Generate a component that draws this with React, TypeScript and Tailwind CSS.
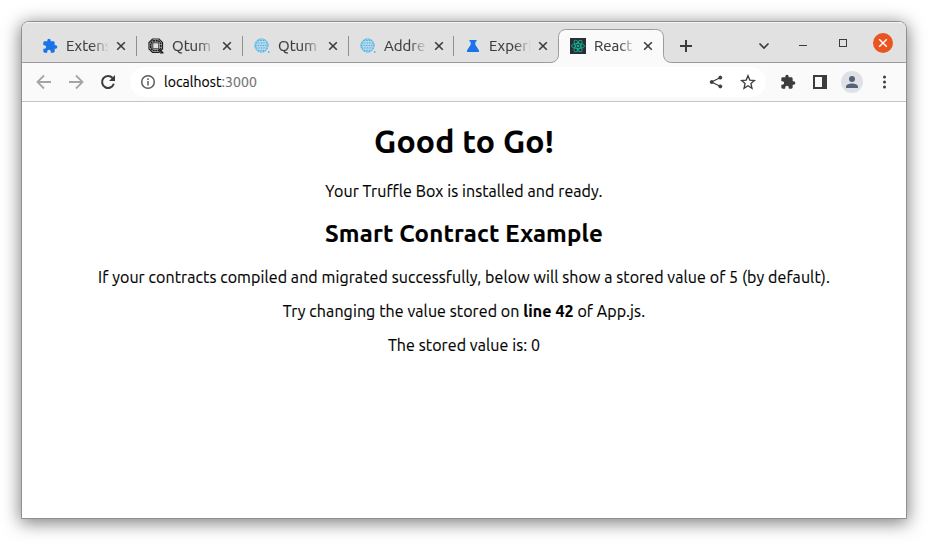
import React from "react";

const uiFont = "font-['Ubuntu','Noto_Sans',sans-serif]";
const puzzle =
  "M20.5 11H19V7c0-1.1-.9-2-2-2h-4V3.5a2.5 2.5 0 0 0-5 0V5H4c-1.1 0-2 .9-2 2v3.8h1.5a2.7 2.7 0 0 1 0 5.4H2V20c0 1.1.9 2 2 2h3.8v-1.5a2.7 2.7 0 0 1 5.4 0V22H17c1.1 0 2-.9 2-2v-4h1.5a2.5 2.5 0 0 0 0-5z";

function PuzzleIcon({ className }: { className: string }) {
  return (
    <svg viewBox="0 0 24 24" className={`h-4 w-4 ${className}`} fill="currentColor">
      <path d={puzzle} />
    </svg>
  );
}

function QtumIcon() {
  return (
    <svg viewBox="0 0 16 16" className="h-4 w-4" fill="none" stroke="#1f1f1f">
      <path d="M4.500 1h6.500l3.500 3.500v6.500L11 14.500H4.500L1 11V4.500z" strokeWidth="1.200" />
      <path d="M5 2.900h5.500l2.200 2.200v5.400l-2.200 2.200H5l-2.200-2.200V5.100z" strokeWidth="1.700" strokeDasharray="2.200 .4" />
      <path d="M4.800 4.800h6v6h-6z" fill="#e1e1e1" strokeWidth=".9" />
      <path d="M11 11.300l4.300 3.700M12 14.800h3.500" strokeWidth="1.300" />
    </svg>
  );
}

function GlobeIcon() {
  return (
    <svg viewBox="0 0 16 16" className="h-4 w-4" fill="none" stroke="#45b0e6" strokeWidth="1">
      <circle cx="7.500" cy="7.500" r="7" fill="#a9d3ea" stroke="none" />
      <circle cx="7.500" cy="7.500" r="6.600" strokeDasharray="1.700 .9" />
      <path
        d="M4 2.500h8M2 5h11M1 7.500h13M2 10h11M4 12.500h8"
        strokeDasharray="1.300 1.200"
      />
      <path d="M5 3.700h6M3 6.200h9M3 8.700h9M5 11.200h6" stroke="#e1e1e1" strokeWidth=".9" strokeDasharray="1.200 1.300" />
      <path d="M14 13.200h1.500v1.500H14z" fill="#35b5ee" stroke="none" />
    </svg>
  );
}

function FlaskIcon() {
  return (
    <svg viewBox="0 0 16 16" className="h-4 w-4" fill="#1a73e8">
      <path d="M4.500 2h7v1.800h-1.200V6.800l3.600 5.400c.6 1 0 1.800-1 1.800H3.100c-1 0-1.600-.8-1-1.800l3.600-5.400V3.800H4.500z" />
    </svg>
  );
}

function ReactIcon() {
  return (
    <svg viewBox="0 0 16 16" className="h-4 w-4" fill="none" stroke="#11b48e" strokeWidth=".9">
      <path d="M0 0h16v16H0z" fill="#2a2c37" stroke="none" />
      <ellipse cx="8" cy="8" rx="6.500" ry="2.500" />
      <ellipse cx="8" cy="8" rx="6.500" ry="2.500" transform="rotate(60 8 8)" />
      <ellipse cx="8" cy="8" rx="6.500" ry="2.500" transform="rotate(120 8 8)" />
      <circle cx="8" cy="8" r="1.300" fill="#11b48e" stroke="none" />
    </svg>
  );
}

function Cross({ className }: { className: string }) {
  return (
    <svg viewBox="0 0 10 10" className={className} fill="none" stroke="currentColor">
      <path d="M1.200 1.200l7.600 7.600M8.800 1.200l-7.600 7.600" />
    </svg>
  );
}

interface TabProps {
  icon: React.ReactNode;
  label: string;
  width: string;
  labelWidth?: string;
  active?: boolean;
  divider?: boolean;
}

function Tab({ icon, label, width, labelWidth = "w-[43px]", active, divider }: TabProps) {
  return (
    <div className={`relative flex h-[34px] shrink-0 items-center pl-[11px] ${width}`}>
      {active && (
        <svg className="absolute top-0 -left-[9px] h-[34px] w-[123px]" viewBox="0 0 123 34" fill="none">
          <path
            d="M0 33.5c5 0 8.500-3 8.500-8V8.500c0-5 3-8 8-8h89c5 0 8 3 8 8v17c0 5 3.500 8 8.500 8V34H0z"
            fill="#fafafa"
          />
          <path
            d="M0 33.500c5 0 8.500-3 8.500-8V8.500c0-5 3-8 8-8h89c5 0 8 3 8 8v17c0 5 3.500 8 8.500 8"
            stroke="#9b9b9b"
          />
        </svg>
      )}
      <span className="relative shrink-0">{icon}</span>
      <span
        className={`relative ml-2 shrink-0 overflow-hidden text-[15px] leading-5 whitespace-nowrap text-[#3c3c3c] mask-r-from-60% [-webkit-text-stroke:0.15px] ${labelWidth}`}
      >
        {label}
      </span>
      <Cross className="relative ml-[7px] h-[10px] w-[10px] shrink-0 stroke-[1.6] text-[#3c3c3c]" />
      {divider && <span className="absolute top-[7px] right-0 h-5 w-px bg-[#8f8f8f]" />}
    </div>
  );
}

function TabStrip() {
  return (
    <div className="flex h-[41px] items-start rounded-t-[7px] border-t border-[#f4f4f4] bg-[#e1e1e1] pt-[6px] pl-[9px] shadow-[inset_0_-1px_0_#9b9b9b]">
      <Tab icon={<PuzzleIcon className="text-[#1a73e8]" />} label="Extens" width="w-[106px]" divider />
      <Tab icon={<QtumIcon />} label="Qtum" width="w-[106px]" divider />
      <Tab icon={<GlobeIcon />} label="Qtum" width="w-[106px]" divider />
      <Tab icon={<GlobeIcon />} label="Addre" width="w-[105px]" divider />
      <Tab icon={<FlaskIcon />} label="Experi" width="w-[105px]" labelWidth="w-[42px]" />
      <Tab icon={<ReactIcon />} label="React" width="w-[106px]" labelWidth="w-[42px]" active />
      <svg viewBox="0 0 12 12" className="mt-[11px] ml-[15px] h-3 w-3 stroke-[#3c3c3c] stroke-2">
        <path d="M6 0v12M0 6h12" />
      </svg>
      <svg viewBox="0 0 12 12" className="mt-[11px] ml-[66px] h-3 w-3" fill="none" stroke="#3c3c3c" strokeWidth="1.7">
        <path d="M1.500 3.500L6 8l4.500-4.500" />
      </svg>
      <span className="mt-4 ml-[29px] h-px w-2 bg-[#3c3c3c]" />
      <span className="mt-[10px] ml-8 h-2 w-2 border border-[#3c3c3c]" />
      <span className="mt-1 ml-[26px] flex h-5 w-5 items-center justify-center rounded-full bg-[#e95420]">
        <Cross className="h-[10px] w-[10px] stroke-[1.4] text-white" />
      </span>
    </div>
  );
}

function Toolbar() {
  return (
    <div className="flex h-[39px] items-center border-b border-[#c4c4c4] bg-[#fafafa] pl-[14px]">
      <svg viewBox="0 0 16 16" className="h-4 w-4" fill="none" stroke="#a5a5a5" strokeWidth="1.800">
        <path d="M15 8H2M8 1.500L1.500 8 8 14.500" />
      </svg>
      <svg viewBox="0 0 16 16" className="ml-4 h-4 w-4" fill="none" stroke="#a5a5a5" strokeWidth="1.800">
        <path d="M1 8h13M8 1.500L14.500 8 8 14.500" />
      </svg>
      <svg viewBox="0 0 16 16" className="ml-4 h-4 w-4" fill="none" stroke="#3c3c3c" strokeWidth="2">
        <path d="M13.800 9.800A6 6 0 1 1 12.600 4" />
        <path d="M15 1v6H9z" fill="#3c3c3c" stroke="none" />
      </svg>
      <div className="ml-[14px] flex h-[30px] w-[636px] items-center rounded-full bg-white pl-[10px]">
        <svg viewBox="0 0 16 16" className="h-4 w-4" fill="none" stroke="#5c5c5c" strokeWidth="1.500">
          <circle cx="8" cy="8" r="6.300" />
          <path d="M8 7v4.500M8 4.300v1.600" />
        </svg>
        <span className="ml-2 text-[14px] leading-5 tracking-[0.07px] text-black [-webkit-text-stroke:0.15px]">
          localhost<span className="text-[#707070]">:3000</span>
        </span>
        <svg viewBox="0 0 14 14" className="mr-[17px] ml-auto h-[14px] w-[14px]" fill="#3c3c3c" stroke="#3c3c3c">
          <path d="M11.500 2.500L2.500 7l9 4.500" fill="none" strokeWidth="1.200" />
          <circle cx="11.300" cy="2.600" r="1.500" />
          <circle cx="2.700" cy="7" r="1.500" />
          <circle cx="11.300" cy="11.400" r="1.500" />
        </svg>
        <svg viewBox="0 0 24 24" className="mr-[10px] h-4 w-4" fill="none" stroke="#3c3c3c" strokeWidth="2">
          <path d="M12 2.500l2.700 6.600 7 .6-5.300 4.700 1.600 7-6-3.700-6 3.700 1.600-7-5.300-4.700 7-.6z" />
        </svg>
      </div>
      <PuzzleIcon className="ml-[14px] text-[#3c3c3c]" />
      <svg viewBox="0 0 14 14" className="ml-[17px] h-[14px] w-[14px]" fill="#3c3c3c">
        <path fillRule="evenodd" d="M0 0h14v14H0zM2 2v10h7V2z" />
      </svg>
      <span className="ml-[14px] flex h-[22px] w-[22px] items-center justify-center rounded-full bg-[#dee1e6] text-[#56617a]">
        <svg viewBox="0 0 12 12" className="h-3 w-3" fill="currentColor">
          <circle cx="6" cy="3" r="3" />
          <path d="M0 12v-1.500C0 8.500 3.500 7.500 6 7.500s6 1 6 3V12z" />
        </svg>
      </span>
      <svg viewBox="0 0 4 14" className="ml-[20px] h-[14px] w-1" fill="#3c3c3c">
        <circle cx="1.500" cy="2" r="1.500" />
        <circle cx="1.500" cy="7" r="1.500" />
        <circle cx="1.500" cy="12" r="1.500" />
      </svg>
    </div>
  );
}

function Page() {
  return (
    <main className="flex flex-col items-center bg-white pt-[21px] text-center text-[16px] leading-[18px] tracking-[0.088px] whitespace-nowrap text-black [font-variant-ligatures:common-ligatures] [-webkit-text-stroke:0.15px]">
      <h1 className="text-[32px] leading-9 font-bold tracking-[0.16px]">Good to Go!</h1>
      <p className="mt-[23px]">Your Truffle Box is installed and ready.</p>
      <h2 className="mt-5 text-[24px] leading-[27px] font-bold tracking-[0.17px]">Smart Contract Example</h2>
      <p className="mt-[21px]">
        If your contracts compiled and migrated successfully, below will show a stored value of 5 (by default).
      </p>
      <p className="mt-4">
        Try changing the value stored on <strong>line 42</strong> of App.js.
      </p>
      <p className="mt-4">The stored value is: 0</p>
    </main>
  );
}

export default function App() {
  return (
    <div className={`h-[558px] w-[936px] overflow-hidden bg-white pt-[21px] pl-[21px] ${uiFont}`}>
      <div className="h-[498px] w-[886px] rounded-t-[8px] border border-[#8f8f8f] bg-white shadow-[0_3px_17px_1px_rgba(0,0,0,0.5)]">
        <TabStrip />
        <Toolbar />
        <Page />
      </div>
    </div>
  );
}
